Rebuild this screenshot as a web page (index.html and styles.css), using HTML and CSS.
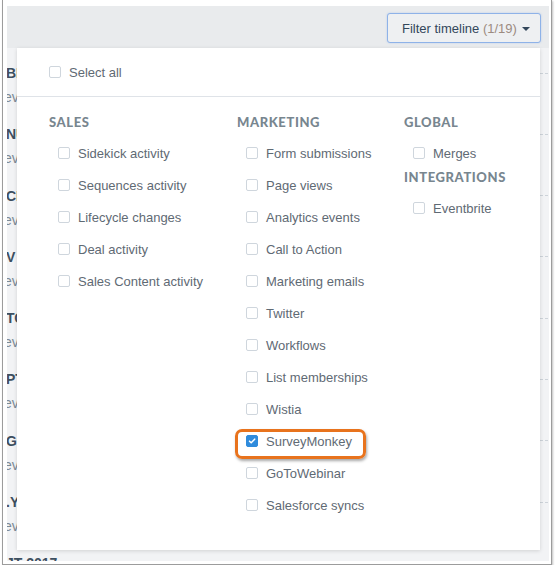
FILE: index.html
```html
<!DOCTYPE html>
<html lang="en">
<head>
<meta charset="utf-8">
<title>Filter timeline</title>
<link rel="stylesheet" href="styles.css">
</head>
<body>
<div class="frame">
  <div class="app">
    <div class="topbar">
      <button class="filter-btn" type="button">Filter timeline <span class="count">(1/19)</span><span class="caret"></span></button>
    </div>
    <div class="timeline">
      <div class="tl-row"><div class="tl-title"><span>BR</span><i class="dash"></i></div><div class="tl-sub">ev</div></div>
      <div class="tl-row"><div class="tl-title"><span>NU</span><i class="dash"></i></div><div class="tl-sub">ev</div></div>
      <div class="tl-row"><div class="tl-title"><span>CE</span><i class="dash"></i></div><div class="tl-sub">ev</div></div>
      <div class="tl-row"><div class="tl-title"><span>V</span><i class="dash"></i></div><div class="tl-sub">ev</div></div>
      <div class="tl-row"><div class="tl-title"><span>TO</span><i class="dash"></i></div><div class="tl-sub">ev</div></div>
      <div class="tl-row"><div class="tl-title"><span>PT</span><i class="dash"></i></div><div class="tl-sub">ev</div></div>
      <div class="tl-row"><div class="tl-title"><span>G</span><i class="dash"></i></div><div class="tl-sub">ev</div></div>
      <div class="tl-row"><div class="tl-title"><span>.Y</span><i class="dash"></i></div><div class="tl-sub">ev</div></div>
      <div class="tl-row month"><div class="tl-title"><span>JT 2017</span></div></div>
    </div>

    <div class="panel">
      <div class="select-all">
        <label class="item"><span class="box"></span>Select all</label>
      </div>
      <div class="groups">
        <div class="col">
          <div class="head">Sales</div>
          <label class="item"><span class="box"></span>Sidekick activity</label>
          <label class="item"><span class="box"></span>Sequences activity</label>
          <label class="item"><span class="box"></span>Lifecycle changes</label>
          <label class="item"><span class="box"></span>Deal activity</label>
          <label class="item"><span class="box"></span>Sales Content activity</label>
        </div>
        <div class="col">
          <div class="head">Marketing</div>
          <label class="item"><span class="box"></span>Form submissions</label>
          <label class="item"><span class="box"></span>Page views</label>
          <label class="item"><span class="box"></span>Analytics events</label>
          <label class="item"><span class="box"></span>Call to Action</label>
          <label class="item"><span class="box"></span>Marketing emails</label>
          <label class="item"><span class="box"></span>Twitter</label>
          <label class="item"><span class="box"></span>Workflows</label>
          <label class="item"><span class="box"></span>List memberships</label>
          <label class="item"><span class="box"></span>Wistia</label>
          <label class="item highlighted"><span class="box checked"><svg viewBox="0 0 12 12" width="12" height="12"><path d="M3 6.2 L5 8.2 L9.2 3.8" fill="none" stroke="#fff" stroke-width="1.8" stroke-linecap="round" stroke-linejoin="round"/></svg></span>SurveyMonkey<span class="ring"></span></label>
          <label class="item"><span class="box"></span>GoToWebinar</label>
          <label class="item"><span class="box"></span>Salesforce syncs</label>
        </div>
        <div class="col">
          <div class="head">Global</div>
          <label class="item"><span class="box"></span>Merges</label>
          <div class="head sub">Integrations</div>
          <label class="item"><span class="box"></span>Eventbrite</label>
        </div>
      </div>
    </div>
  </div>
</div>
</body>
</html>
```

FILE: styles.css
```css
* { box-sizing: border-box; }

html, body {
  margin: 0;
  padding: 0;
  background: #ffffff;
  font-family: "Liberation Sans", Arial, sans-serif;
}

.frame {
  margin-left: 2px;
  width: 550px;
  height: 565px;
  border-left: 1px solid #9c9c9c;
  border-right: 1px solid #9c9c9c;
  border-bottom: 1px solid #9c9c9c;
  box-shadow: 1px 1px 2px rgba(0, 0, 0, 0.25);
  padding: 6px 2px 3px 4px;
  background: #ffffff;
}

.app {
  position: relative;
  height: 100%;
  background: #f2f3f5;
  overflow: hidden;
}

.topbar {
  height: 42px;
  background: #e9ebed;
  display: flex;
  justify-content: flex-end;
  align-items: flex-start;
  padding: 7px 8px 0 0;
}

.filter-btn {
  height: 30px;
  width: 154px;
  border: 1px solid #8eb2e8;
  border-radius: 3px;
  background: #eef0f2;
  color: #33475b;
  font-family: "Liberation Sans", Arial, sans-serif;
  font-size: 13px;
  padding: 0 11px 0 14px;
  display: flex;
  align-items: center;
  white-space: pre;
  box-shadow: 0 0 2px rgba(82, 140, 230, 0.35);
}

.count { color: #9c8b80; }

.caret {
  margin-left: 5px;
  width: 0;
  height: 0;
  border-left: 4px solid transparent;
  border-right: 4px solid transparent;
  border-top: 4px solid #33475b;
  margin-top: 2px;
}

.tl-row {
  height: 61.3px;
  padding-top: 16px;
}

.tl-title {
  display: flex;
  align-items: center;
  height: 18px;
  font-weight: 700;
  font-size: 14px;
  color: #3d4f60;
  margin-left: -1px;
}

.dash {
  flex: 1;
  margin-left: 8px;
  margin-right: 1px;
  border-top: 1px dashed #cdd3d9;
}

.tl-sub {
  margin-top: 6px;
  height: 18px;
  line-height: 18px;
  font-size: 14px;
  color: #7c8a96;
  margin-left: -3px;
}

.panel {
  position: absolute;
  left: 10px;
  top: 42px;
  width: 523px;
  height: 502px;
  background: #ffffff;
  box-shadow: 0 1px 4px rgba(0, 0, 0, 0.14);
}

.select-all {
  padding: 12px 32px;
  border-bottom: 1px solid #dfe3e8;
}

.select-all .item { height: 24px; }

.groups {
  display: grid;
  grid-template-columns: 188px 167px 1fr;
  padding: 18px 0 0 32px;
}

.col {
  display: flex;
  flex-direction: column;
  align-items: flex-start;
}

.head {
  height: 14px;
  line-height: 14px;
  margin-bottom: 8px;
  font-family: Lato, "Open Sans", sans-serif;
  font-weight: 900;
  font-size: 13px;
  letter-spacing: 0.6px;
  text-transform: uppercase;
  color: #78868f;
}

.head.sub { margin-top: 1px; }

.item {
  position: relative;
  display: flex;
  align-items: center;
  height: 32px;
  font-size: 13px;
  color: #5f6a74;
  white-space: nowrap;
}

.groups .item { padding-left: 9px; }

.box {
  width: 12px;
  height: 12px;
  border: 1px solid #cfd6dd;
  border-radius: 2px;
  background: #ffffff;
  margin-right: 8px;
  display: flex;
  align-items: center;
  justify-content: center;
  flex: none;
}

.box.checked {
  background: #2f8bdc;
  border-color: #2f8bdc;
}

.box.checked svg { display: block; }

.ring {
  position: absolute;
  left: -2px;
  top: 4px;
  width: 131px;
  height: 30px;
  border: 3px solid #e8731d;
  border-radius: 7px;
  box-shadow: 1px 2px 3px rgba(0, 0, 0, 0.35);
}
```
